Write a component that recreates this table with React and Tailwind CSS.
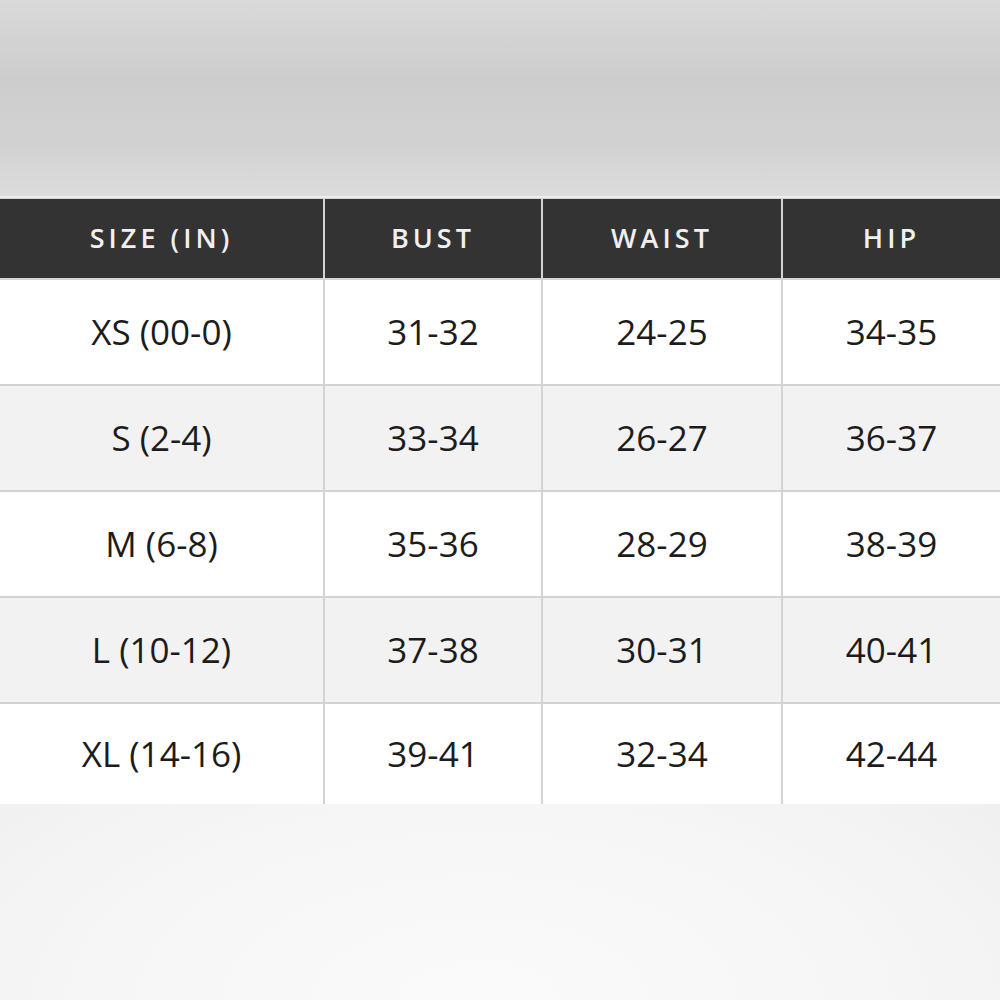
const headers = ['SIZE (IN)', 'BUST', 'WAIST', 'HIP'];

const rows = [
  ['XS (00-0)', '31-32', '24-25', '34-35'],
  ['S (2-4)', '33-34', '26-27', '36-37'],
  ['M (6-8)', '35-36', '28-29', '38-39'],
  ['L (10-12)', '37-38', '30-31', '40-41'],
  ['XL (14-16)', '39-41', '32-34', '42-44'],
];

export default function App() {
  return (
    <div
      className="w-[1000px] h-[1000px] flex flex-col overflow-hidden bg-[#f3f3f3]"
      style={{ fontFamily: '"Open Sans", "Liberation Sans", sans-serif' }}
    >
      {/* top backdrop */}
      <div className="h-[196px] shrink-0 bg-[linear-gradient(180deg,#d9d9d9_0%,#cdcdcd_40%,#d2d2d2_75%,#dcdcdc_100%)]" />

      {/* size chart */}
      <div className="shrink-0 border-t-2 border-[#ececec]">
        <div className="grid grid-cols-[323px_216px_238px_217px] gap-[2px] bg-[#d3d3d3] pr-[2px] pt-[1px]">
          {headers.map((h) => (
            <div
              key={h}
              className="h-[79px] bg-[#333333] text-[#f0f0f0] flex items-center justify-center text-[27px] font-semibold tracking-[0.15em]"
            >
              {h}
            </div>
          ))}
          {rows.map((row, i) =>
            row.map((cell, j) => (
              <div
                key={i + '-' + j}
                className={`flex items-center justify-center text-[35px] text-[#1c1c1c] ${
                  i === rows.length - 1 ? 'h-[100px]' : 'h-[104px]'
                } ${i % 2 === 1 ? 'bg-[#f2f2f2]' : 'bg-white'}`}
              >
                {cell}
              </div>
            ))
          )}
        </div>
      </div>

      {/* bottom backdrop */}
      <div className="flex-1 bg-[radial-gradient(ellipse_80%_200%_at_48%_100%,#fafafa_0%,#f6f6f6_50%,#f0f0f0_80%,#e5e5e5_100%)]" />
    </div>
  );
}
